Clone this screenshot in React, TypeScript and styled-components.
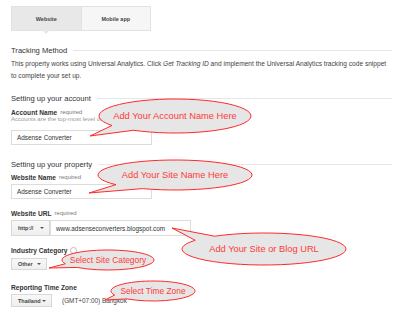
import React from 'react';
import styled, { createGlobalStyle } from 'styled-components';

const GlobalStyle = createGlobalStyle`
  html, body {
    margin: 0;
    padding: 0;
    background: #fff;
  }
  body {
    font-family: "Liberation Sans", Arial, sans-serif;
    color: #333;
  }
`;

const Page = styled.div`
  position: relative;
  width: 400px;
  height: 318px;
  overflow: hidden;
  padding: 6px 8px 0 11px;
  box-sizing: border-box;
`;

const Tabs = styled.div`
  display: flex;
  width: 140px;
  height: 25px;
  border: 1px solid #e2e2e2;
  box-sizing: border-box;
`;

const Tab = styled.div<{ $active?: boolean }>`
  position: relative;
  flex: 1;
  display: flex;
  align-items: center;
  justify-content: center;
  font-size: 5.5px;
  font-weight: bold;
  color: #444;
  background: ${p => (p.$active ? '#e8e8e8' : '#f6f6f6')};

  & + & {
    border-left: 1px solid #e2e2e2;
  }

  ${p =>
    p.$active &&
    `
    &::after {
      content: '';
      position: absolute;
      left: 50%;
      bottom: -4px;
      margin-left: -4px;
      border-left: 4px solid transparent;
      border-right: 4px solid transparent;
      border-top: 4px solid #e8e8e8;
    }
  `}
`;

const SectionTitle = styled.div<{ $top: number }>`
  display: flex;
  align-items: center;
  gap: 6px;
  height: 10px;
  margin-top: ${p => p.$top}px;
  font-size: 7.6px;
  color: #333;
  white-space: nowrap;

  &::after {
    content: '';
    flex: 1;
    height: 1px;
    background: #e6e6e6;
  }
`;

const Paragraph = styled.p`
  margin: 3px 0 0;
  font-size: 6.6px;
  line-height: 12px;
  color: #444;
  white-space: nowrap;
`;

const Label = styled.div<{ $top: number }>`
  display: flex;
  align-items: center;
  gap: 3px;
  height: 8px;
  margin-top: ${p => p.$top}px;
  font-size: 6.6px;
  font-weight: bold;
  color: #333;
`;

const Required = styled.span`
  font-size: 6px;
  font-weight: normal;
  color: #777;
`;

const Help = styled.span`
  width: 5px;
  height: 5px;
  border: 1px solid #bbb;
  border-radius: 50%;
`;

const Hint = styled.div`
  height: 7px;
  line-height: 7px;
  font-size: 6px;
  color: #999;
  white-space: nowrap;
`;

const TextField = styled.div<{ $top: number; $width: number; $height: number }>`
  display: flex;
  align-items: center;
  width: ${p => p.$width}px;
  height: ${p => p.$height}px;
  margin-top: ${p => p.$top}px;
  padding-left: 5px;
  box-sizing: border-box;
  border: 1px solid #dcdcdc;
  background: #fff;
  font-size: 6.4px;
  color: #333;
`;

const Row = styled.div<{ $top: number; $gap?: number }>`
  display: flex;
  align-items: center;
  gap: ${p => p.$gap ?? 0}px;
  margin-top: ${p => p.$top}px;
`;

const SelectBox = styled.div<{ $width: number; $height: number }>`
  display: flex;
  align-items: center;
  justify-content: space-between;
  width: ${p => p.$width}px;
  height: ${p => p.$height}px;
  padding: 0 5px 0 6px;
  box-sizing: border-box;
  border: 1px solid #d8d8d8;
  background: linear-gradient(#f8f8f8, #efefef);
  font-size: 5.5px;
  font-weight: bold;
  color: #444;
`;

const Caret = styled.span`
  width: 0;
  height: 0;
  border-left: 2px solid transparent;
  border-right: 2px solid transparent;
  border-top: 2px solid #555;
`;

const ZoneText = styled.span`
  font-size: 6.4px;
  color: #444;
`;

const CalloutWrap = styled.div<{ $x: number; $y: number; $w: number; $h: number }>`
  position: absolute;
  left: ${p => p.$x}px;
  top: ${p => p.$y}px;
  width: ${p => p.$w}px;
  height: ${p => p.$h}px;
  display: flex;
  align-items: center;
  justify-content: center;
`;

const CalloutSvg = styled.svg`
  position: absolute;
  left: 0;
  top: 0;
  overflow: visible;
`;

const CalloutText = styled.span<{ $size: number }>`
  position: relative;
  font-size: ${p => p.$size}px;
  color: #ff3a3a;
  white-space: nowrap;
`;

type CalloutProps = {
  cx: number;
  cy: number;
  rx: number;
  ry: number;
  tip: [number, number];
  from: number;
  to: number;
  size: number;
  text: string;
};

// ellipse balloon with a wedge tail between two angles (degrees, y down)
function Callout({ cx, cy, rx, ry, tip, from, to, size, text }: CalloutProps) {
  const x0 = cx - rx - 2;
  const y0 = cy - ry - 2;
  const pt = (deg: number) => {
    const r = (deg * Math.PI) / 180;
    return [cx + rx * Math.cos(r) - x0, cy + ry * Math.sin(r) - y0];
  };
  const [ax, ay] = pt(to);
  const [bx, by] = pt(from);
  const tx = tip[0] - x0;
  const ty = tip[1] - y0;
  const d = `M${ax} ${ay} A${rx} ${ry} 0 1 1 ${bx} ${by} L${tx} ${ty} Z`;
  const w = rx * 2 + 4;
  const h = ry * 2 + 4;
  return (
    <CalloutWrap $x={x0} $y={y0} $w={w} $h={h}>
      <CalloutSvg width={w} height={h}>
        <path d={d} fill="#e6e6e6" stroke="#ff2a2a" strokeWidth={1} />
      </CalloutSvg>
      <CalloutText $size={size}>{text}</CalloutText>
    </CalloutWrap>
  );
}

export default function App() {
  return (
    <>
      <GlobalStyle />
      <Page>
        <Tabs>
          <Tab $active>Website</Tab>
          <Tab>Mobile app</Tab>
        </Tabs>

        <SectionTitle $top={14}>Tracking Method</SectionTitle>
        <Paragraph>
          This property works using Universal Analytics. Click <i>Get Tracking ID</i> and implement the
          Universal Analytics tracking code snippet
          <br />
          to complete your set up.
        </Paragraph>

        <SectionTitle $top={11}>Setting up your account</SectionTitle>
        <Label $top={5}>
          Account Name <Required>required</Required>
        </Label>
        <Hint>Accounts are the top-most level of organization and contain one or more tracking IDs.</Hint>
        <TextField $top={7} $width={141} $height={15}>
          Adsense Converter
        </TextField>

        <SectionTitle $top={14}>Setting up your property</SectionTitle>
        <Label $top={4}>
          Website Name <Required>required</Required>
        </Label>
        <TextField $top={3} $width={141} $height={15}>
          Adsense Converter
        </TextField>

        <Label $top={10}>
          Website URL <Required>required</Required>
        </Label>
        <Row $top={3}>
          <SelectBox $width={39} $height={16}>
            http:// <Caret />
          </SelectBox>
          <TextField $top={0} $width={141} $height={16}>
            www.adsenseconverters.blogspot.com
          </TextField>
        </Row>

        <Label $top={10}>
          Industry Category <Help />
        </Label>
        <Row $top={4}>
          <SelectBox $width={36} $height={12}>
            Other <Caret />
          </SelectBox>
        </Row>

        <Label $top={13}>Reporting Time Zone</Label>
        <Row $top={3} $gap={10}>
          <SelectBox $width={41} $height={13}>
            Thailand <Caret />
          </SelectBox>
          <ZoneText>(GMT+07:00) Bangkok</ZoneText>
        </Row>

        <Callout cx={175} cy={116} rx={76} ry={17} tip={[90, 136]} from={123} to={146} size={9.3} text="Add Your Account Name Here" />
        <Callout cx={175} cy={175} rx={77} ry={15} tip={[89, 193]} from={115} to={140} size={9.3} text="Add Your Site Name Here" />
        <Callout cx={264} cy={249} rx={82} ry={16} tip={[172, 228]} from={213} to={233} size={9.3} text="Add Your Site or Blog URL" />
        <Callout cx={108} cy={260} rx={46} ry={10} tip={[49, 268]} from={132} to={158} size={8.4} text="Select Site Category" />
        <Callout cx={153} cy={291} rx={42} ry={10} tip={[105, 300]} from={128} to={156} size={8.4} text="Select Time Zone" />
      </Page>
    </>
  );
}
